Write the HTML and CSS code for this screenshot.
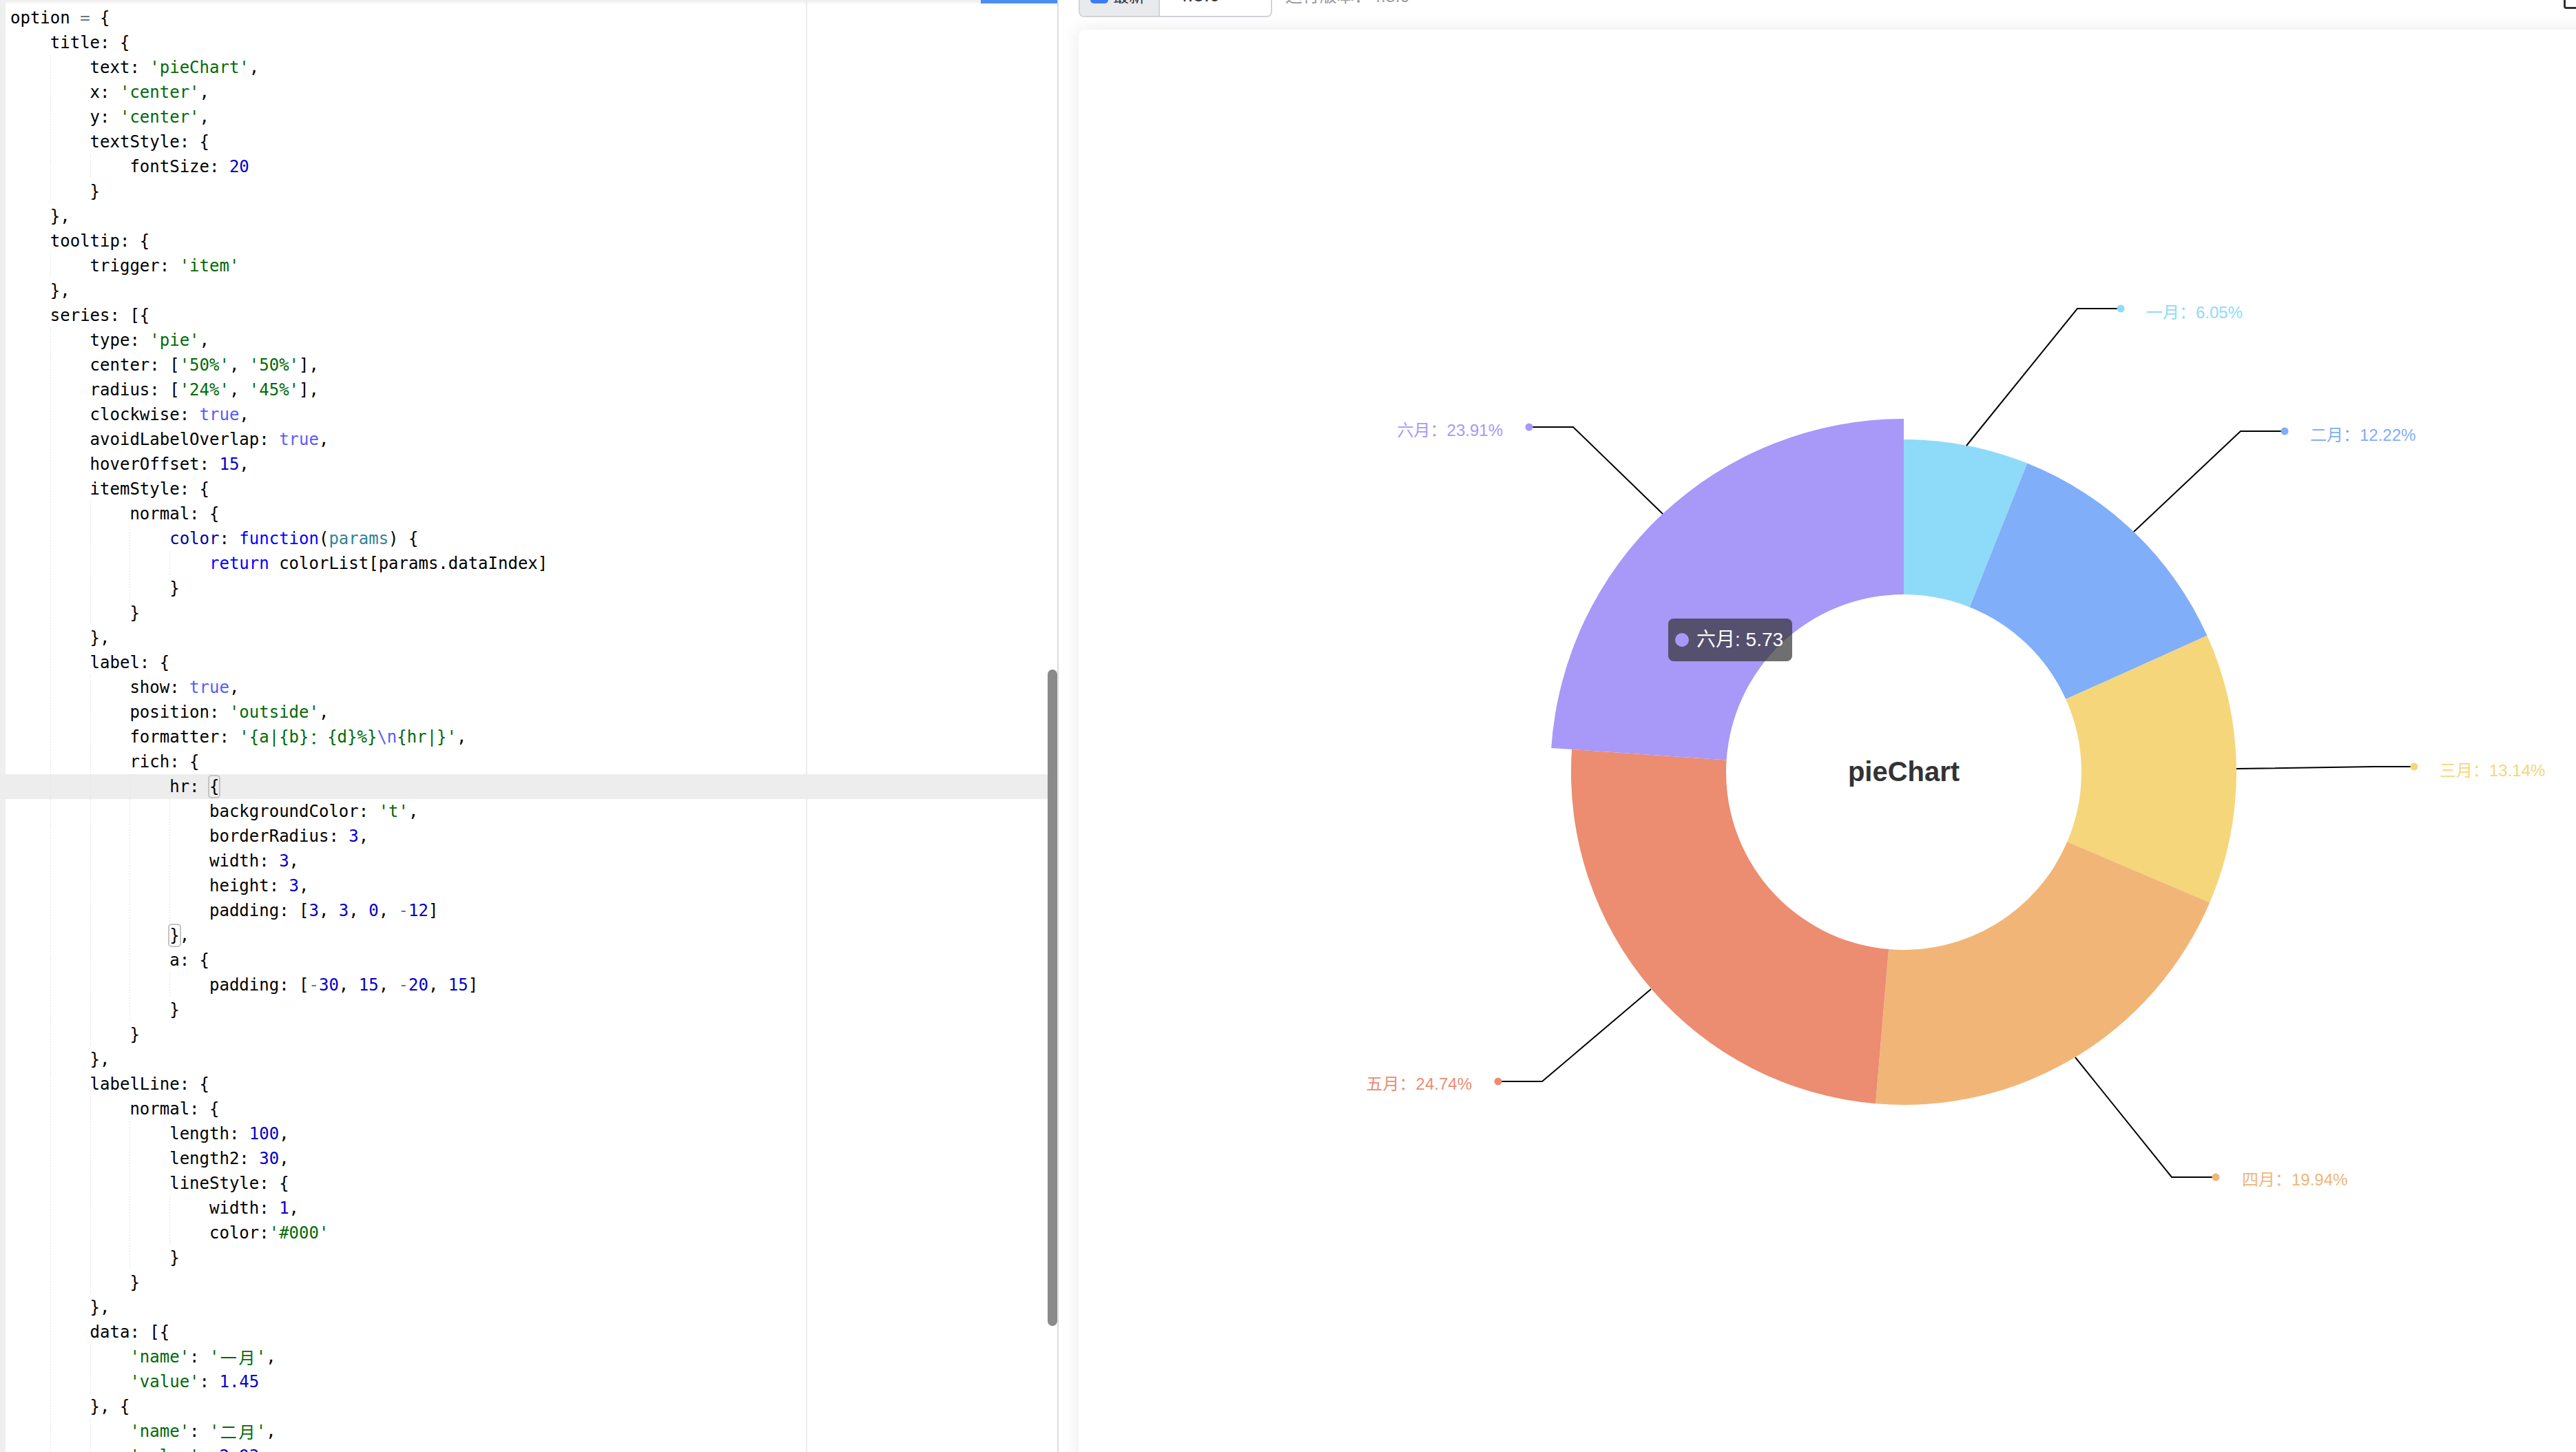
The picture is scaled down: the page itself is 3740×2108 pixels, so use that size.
FILE: index.html
```html
<!DOCTYPE html>
<html lang="zh-CN">
<head>
<meta charset="utf-8">
<title>pieChart editor</title>
<link rel="stylesheet" href="styles.css">
</head>
<body>
<div class="editor">
  <div class="tabline"></div>
  <div class="code">
    <div class="margin-line"></div>
    <div class="ln">option <span class="o">=</span> {</div>
    <div class="ln"><span class="d">    </span>title: {</div>
    <div class="ln"><span class="d">    </span><span class="g">    </span>text: <span class="s">'pieChart'</span>,</div>
    <div class="ln"><span class="d">    </span><span class="g">    </span>x: <span class="s">'center'</span>,</div>
    <div class="ln"><span class="d">    </span><span class="g">    </span>y: <span class="s">'center'</span>,</div>
    <div class="ln"><span class="d">    </span><span class="g">    </span>textStyle: {</div>
    <div class="ln"><span class="d">    </span><span class="g">    </span><span class="g">    </span>fontSize: <span class="n">20</span></div>
    <div class="ln"><span class="d">    </span><span class="g">    </span>}</div>
    <div class="ln"><span class="d">    </span>},</div>
    <div class="ln"><span class="d">    </span>tooltip: {</div>
    <div class="ln"><span class="d">    </span><span class="g">    </span>trigger: <span class="s">'item'</span></div>
    <div class="ln"><span class="d">    </span>},</div>
    <div class="ln"><span class="d">    </span>series: [{</div>
    <div class="ln"><span class="d">    </span><span class="g">    </span>type: <span class="s">'pie'</span>,</div>
    <div class="ln"><span class="d">    </span><span class="g">    </span>center: [<span class="s">'50%'</span>, <span class="s">'50%'</span>],</div>
    <div class="ln"><span class="d">    </span><span class="g">    </span>radius: [<span class="s">'24%'</span>, <span class="s">'45%'</span>],</div>
    <div class="ln"><span class="d">    </span><span class="g">    </span>clockwise: <span class="c">true</span>,</div>
    <div class="ln"><span class="d">    </span><span class="g">    </span>avoidLabelOverlap: <span class="c">true</span>,</div>
    <div class="ln"><span class="d">    </span><span class="g">    </span>hoverOffset: <span class="n">15</span>,</div>
    <div class="ln"><span class="d">    </span><span class="g">    </span>itemStyle: {</div>
    <div class="ln"><span class="d">    </span><span class="g">    </span><span class="g">    </span>normal: {</div>
    <div class="ln"><span class="d">    </span><span class="g">    </span><span class="g">    </span><span class="g">    </span><span class="f">color</span>: <span class="kw">function</span>(<span class="p">params</span>) {</div>
    <div class="ln"><span class="d">    </span><span class="g">    </span><span class="g">    </span><span class="g">    </span><span class="g">    </span><span class="kw">return</span> colorList[params.dataIndex]</div>
    <div class="ln"><span class="d">    </span><span class="g">    </span><span class="g">    </span><span class="g">    </span>}</div>
    <div class="ln"><span class="d">    </span><span class="g">    </span><span class="g">    </span>}</div>
    <div class="ln"><span class="d">    </span><span class="g">    </span>},</div>
    <div class="ln"><span class="d">    </span><span class="g">    </span>label: {</div>
    <div class="ln"><span class="d">    </span><span class="g">    </span><span class="g">    </span>show: <span class="c">true</span>,</div>
    <div class="ln"><span class="d">    </span><span class="g">    </span><span class="g">    </span>position: <span class="s">'outside'</span>,</div>
    <div class="ln"><span class="d">    </span><span class="g">    </span><span class="g">    </span>formatter: <span class="s">'{a|{b}<span class="w">：</span>{d}%}</span><span class="c">\n</span><span class="s">{hr|}'</span>,</div>
    <div class="ln"><span class="d">    </span><span class="g">    </span><span class="g">    </span>rich: {</div>
    <div class="ln active"><span class="d">    </span><span class="g">    </span><span class="g">    </span><span class="g">    </span>hr: <span class="bm">{</span></div>
    <div class="ln"><span class="d">    </span><span class="g">    </span><span class="g">    </span><span class="g">    </span><span class="g">    </span>backgroundColor: <span class="s">'t'</span>,</div>
    <div class="ln"><span class="d">    </span><span class="g">    </span><span class="g">    </span><span class="g">    </span><span class="g">    </span>borderRadius: <span class="n">3</span>,</div>
    <div class="ln"><span class="d">    </span><span class="g">    </span><span class="g">    </span><span class="g">    </span><span class="g">    </span>width: <span class="n">3</span>,</div>
    <div class="ln"><span class="d">    </span><span class="g">    </span><span class="g">    </span><span class="g">    </span><span class="g">    </span>height: <span class="n">3</span>,</div>
    <div class="ln"><span class="d">    </span><span class="g">    </span><span class="g">    </span><span class="g">    </span><span class="g">    </span>padding: [<span class="n">3</span>, <span class="n">3</span>, <span class="n">0</span>, <span class="o">-</span><span class="n">12</span>]</div>
    <div class="ln"><span class="d">    </span><span class="g">    </span><span class="g">    </span><span class="g">    </span><span class="bm">}</span>,</div>
    <div class="ln"><span class="d">    </span><span class="g">    </span><span class="g">    </span><span class="g">    </span>a: {</div>
    <div class="ln"><span class="d">    </span><span class="g">    </span><span class="g">    </span><span class="g">    </span><span class="g">    </span>padding: [<span class="o">-</span><span class="n">30</span>, <span class="n">15</span>, <span class="o">-</span><span class="n">20</span>, <span class="n">15</span>]</div>
    <div class="ln"><span class="d">    </span><span class="g">    </span><span class="g">    </span><span class="g">    </span>}</div>
    <div class="ln"><span class="d">    </span><span class="g">    </span><span class="g">    </span>}</div>
    <div class="ln"><span class="d">    </span><span class="g">    </span>},</div>
    <div class="ln"><span class="d">    </span><span class="g">    </span>labelLine: {</div>
    <div class="ln"><span class="d">    </span><span class="g">    </span><span class="g">    </span>normal: {</div>
    <div class="ln"><span class="d">    </span><span class="g">    </span><span class="g">    </span><span class="g">    </span>length: <span class="n">100</span>,</div>
    <div class="ln"><span class="d">    </span><span class="g">    </span><span class="g">    </span><span class="g">    </span>length2: <span class="n">30</span>,</div>
    <div class="ln"><span class="d">    </span><span class="g">    </span><span class="g">    </span><span class="g">    </span>lineStyle: {</div>
    <div class="ln"><span class="d">    </span><span class="g">    </span><span class="g">    </span><span class="g">    </span><span class="g">    </span>width: <span class="n">1</span>,</div>
    <div class="ln"><span class="d">    </span><span class="g">    </span><span class="g">    </span><span class="g">    </span><span class="g">    </span>color:<span class="s">'#000'</span></div>
    <div class="ln"><span class="d">    </span><span class="g">    </span><span class="g">    </span><span class="g">    </span>}</div>
    <div class="ln"><span class="d">    </span><span class="g">    </span><span class="g">    </span>}</div>
    <div class="ln"><span class="d">    </span><span class="g">    </span>},</div>
    <div class="ln"><span class="d">    </span><span class="g">    </span>data: [{</div>
    <div class="ln"><span class="d">    </span><span class="g">    </span><span class="g">    </span><span class="s">'name'</span>: <span class="s">'<span class="w">一</span><span class="w">月</span>'</span>,</div>
    <div class="ln"><span class="d">    </span><span class="g">    </span><span class="g">    </span><span class="s">'value'</span>: <span class="n">1.45</span></div>
    <div class="ln"><span class="d">    </span><span class="g">    </span>}, {</div>
    <div class="ln"><span class="d">    </span><span class="g">    </span><span class="g">    </span><span class="s">'name'</span>: <span class="s">'<span class="w">二</span><span class="w">月</span>'</span>,</div>
    <div class="ln"><span class="d">    </span><span class="g">    </span><span class="g">    </span><span class="s">'value'</span>: <span class="n">2.93</span></div>
  </div>
  <div class="scrollbar"></div>
</div>
<div class="preview">
  <div class="toolbar">
    <div class="btngroup">
      <div class="latest"><span class="check"></span><span class="latest-text">最新</span></div>
      <div class="version"><span class="ver">4.8.0</span><span class="caret">▼</span></div>
    </div>
    <div class="runver">运行版本：4.8.0</div>
    <div class="corner"></div>
  </div>
  <div class="card">
    <svg class="chart" viewBox="1566 43 2398 2156" width="2398" height="2156" xmlns="http://www.w3.org/2000/svg">
      <path fill="#8edbf9" d="M2764 638 A483 483 0 0 1 2943.2 672.5 L2859.7 881.4 A258 258 0 0 0 2764 863 Z"/>
      <path fill="#80aef8" d="M2943.2 672.5 A483 483 0 0 1 3204.5 922.8 L2999.3 1015.1 A258 258 0 0 0 2859.7 881.4 Z"/>
      <path fill="#f5d67b" d="M3204.5 922.8 A483 483 0 0 1 3208.3 1310.3 L3001.3 1222.1 A258 258 0 0 0 2999.3 1015.1 Z"/>
      <path fill="#f1b677" d="M3208.3 1310.3 A483 483 0 0 1 2723.1 1602.3 L2742.1 1378.1 A258 258 0 0 0 3001.3 1222.1 Z"/>
      <path fill="#ec8c71" d="M2723.1 1602.3 A483 483 0 0 1 2282.1 1088 L2506.6 1103.4 A258 258 0 0 0 2742.1 1378.1 Z"/>
      <path fill="#a898f7" d="M2252.2 1085.9 A513 513 0 0 1 2764 608 L2764 863 A258 258 0 0 0 2506.6 1103.4 Z"/>
      <g fill="none" stroke="#000" stroke-width="2">
        <path d="M2855 647 L3016 448 L3079 448"/>
        <path d="M3098 772 L3253 626 L3317 626"/>
        <path d="M3247 1116 L3447 1113 L3505 1113"/>
        <path d="M3013 1535 L3153 1709 L3217 1709"/>
        <path d="M2397 1436 L2239 1570 L2175 1570"/>
        <path d="M2414 746 L2284 620 L2220 620"/>
      </g>
      <circle cx="3079" cy="448" r="5.5" fill="#8edbf9"/>
      <circle cx="3317" cy="626" r="5.5" fill="#80aef8"/>
      <circle cx="3505" cy="1113" r="5.5" fill="#f5d67b"/>
      <circle cx="3217" cy="1709" r="5.5" fill="#f1b677"/>
      <circle cx="2175" cy="1570" r="5.5" fill="#ec8c71"/>
      <circle cx="2220" cy="620" r="5.5" fill="#a898f7"/>
      <g class="lbl">
        <text x="3116" y="453" fill="#8edbf9">一月：6.05%</text>
        <text x="3354" y="631" fill="#80aef8">二月：12.22%</text>
        <text x="3542" y="1118" fill="#f5d67b">三月：13.14%</text>
        <text x="3255" y="1712" fill="#f1b677">四月：19.94%</text>
        <text x="2137" y="1573" fill="#ec8c71" text-anchor="end">五月：24.74%</text>
        <text x="2182" y="624" fill="#a898f7" text-anchor="end">六月：23.91%</text>
      </g>
      <text class="title" x="2764" y="1134" text-anchor="middle">pieChart</text>
    </svg>
    <div class="tooltip"><span class="tip-dot"></span><span class="tip-text">六月: 5.73</span></div>
  </div>
</div>
</body>
</html>
```

FILE: styles.css
```css
* { box-sizing: border-box; }
html, body { margin: 0; padding: 0; }
body {
  width: 3740px;
  height: 2108px;
  overflow: hidden;
  display: flex;
  background: #ffffff;
  font-family: "Liberation Sans", "Noto Sans CJK SC", sans-serif;
}

/* ---------- editor ---------- */
.editor {
  width: 1535px;
  flex-shrink: 0;
  height: 2108px;
  position: relative;
  background: #efefef;
  padding-left: 8px;
  overflow: hidden;
}
.tabline {
  position: absolute;
  top: 0;
  left: 1424px;
  width: 111px;
  height: 5px;
  background: #4a8ef0;
  z-index: 3;
}
.code {
  position: relative;
  height: 100%;
  background: #ffffff;
  padding: 8px 0 0 7px;
  font-family: "DejaVu Sans Mono", "Noto Sans CJK SC", monospace;
  font-size: 24px;
  line-height: 36px;
  color: #000000;
}
.code::before {
  content: "";
  position: absolute;
  left: 0;
  right: 0;
  top: 0;
  height: 7px;
  background: linear-gradient(rgba(0,0,0,0.07), rgba(0,0,0,0));
}
.margin-line {
  position: absolute;
  top: 0;
  bottom: 0;
  left: 1162px;
  width: 2px;
  background: #ececec;
}
.ln {
  height: 36px;
  white-space: pre;
  position: relative;
}
.ln.active {
  background: #ededed;
  margin-left: -15px;
  padding-left: 15px;
  margin-right: 14px;
}
.d, .g {
  display: inline-block;
  height: 36px;
  vertical-align: top;
}
.g {
  background-image: repeating-linear-gradient(to bottom, #e3e3e3 0, #e3e3e3 2px, transparent 2px, transparent 4px);
  background-size: 1px 100%;
  background-repeat: no-repeat;
  background-position: 0 0;
}
.w {
  display: inline-block;
  width: 2ch;
  text-align: center;
  font-family: "Noto Sans CJK SC", sans-serif;
  font-size: 24px;
  line-height: 36px;
  vertical-align: top;
}
.s { color: #036a07; }
.n { color: #0000cd; }
.c { color: #585cf6; }
.kw { color: #0000ff; }
.f { color: #0000a2; }
.p { color: #318495; }
.o { color: #687687; }
.bm {
  display: inline-block;
  height: 34px;
  line-height: 30px;
  margin-top: 1px;
  vertical-align: top;
  border: 2px solid #c4c4c4;
  border-radius: 5px;
  margin-left: -2px;
  margin-right: -2px;
}
.scrollbar {
  position: absolute;
  left: 1521px;
  top: 972px;
  width: 14px;
  height: 953px;
  border-radius: 7px;
  background: #8b8b8b;
}

/* ---------- preview ---------- */
.preview {
  flex: 1;
  position: relative;
  border-left: 2px solid #dcdde3;
  padding-left: 29px;
  overflow: hidden;
  background: #ffffff;
}
.toolbar {
  display: flex;
  align-items: flex-end;
  height: 52px;
  margin-top: -27px;
  gap: 19px;
}
.btngroup {
  display: flex;
  height: 52px;
  width: 281px;
  border: 2px solid #d3d4d8;
  border-top: none;
  border-radius: 0 0 8px 8px;
  overflow: hidden;
}
.latest {
  width: 116px;
  background: #e9eaed;
  border-right: 2px solid #d3d4d8;
  display: flex;
  align-items: flex-end;
  gap: 7px;
  padding: 0 0 16px 15px;
}
.check {
  width: 26px;
  height: 26px;
  border-radius: 5px;
  background: #3b7cf0;
  margin-bottom: 2px;
}
.latest-text {
  font-size: 23px;
  line-height: 23px;
  color: #333;
}
.version {
  flex: 1;
  display: flex;
  align-items: flex-end;
  padding: 0 0 16px 25px;
  background: #fff;
}
.ver {
  font-size: 28px;
  line-height: 28px;
  color: #333;
  width: 97px;
}
.caret {
  font-size: 16px;
  line-height: 16px;
  color: #333;
  margin-bottom: 5px;
}
.runver {
  font-size: 25px;
  line-height: 25px;
  color: #9a9a9a;
  padding-bottom: 18px;
}
.corner {
  margin-left: auto;
  width: 30px;
  height: 40px;
  margin-bottom: 12px;
  margin-right: -12px;
  border: 3px solid #333;
  border-radius: 4px;
}
.card {
  position: relative;
  margin-top: 18px;
  width: 2398px;
  height: 2156px;
  background: #fff;
  border-radius: 10px;
  box-shadow: 0 0 26px rgba(0,0,0,0.09);
}
.chart {
  position: absolute;
  left: 0;
  top: 0;
}
.lbl text {
  font-family: "Liberation Sans", "Noto Sans CJK SC", sans-serif;
  font-size: 24px;
  dominant-baseline: central;
}
.title {
  font-family: "Liberation Sans", "Noto Sans CJK SC", sans-serif;
  font-size: 40px;
  font-weight: bold;
  fill: #333333;
}
.tooltip {
  position: absolute;
  left: 856px;
  top: 855px;
  width: 180px;
  height: 62px;
  border-radius: 8px;
  background: rgba(50,50,50,0.7);
  display: flex;
  align-items: center;
  padding-left: 10px;
}
.tip-dot {
  width: 20px;
  height: 20px;
  border-radius: 50%;
  background: #a898f7;
  margin-right: 11px;
}
.tip-text {
  font-family: "Liberation Sans", "Noto Sans CJK SC", sans-serif;
  font-size: 28px;
  line-height: 28px;
  color: #ffffff;
  white-space: nowrap;
}
```
